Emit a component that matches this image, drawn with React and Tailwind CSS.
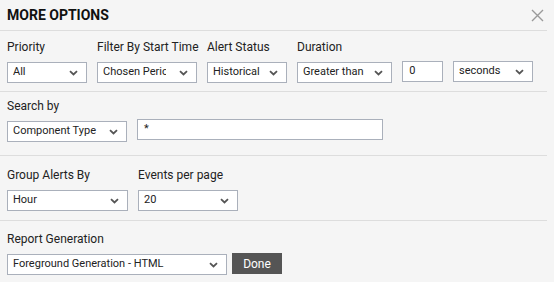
const Chevron = () => (
    <svg width="9" height="6" viewBox="0 0 9 6" className="shrink-0">
        <path d="M1 1.2 L4.5 4.5 L8 1.2" fill="none" stroke="#555" strokeWidth="1.8" />
    </svg>
);

const Select = ({ value, width, tight }) => (
    <div
        className="h-[21px] bg-white border border-[#aab0bb] flex items-center pl-[5px] pr-[8px] text-[11px] text-[#222] overflow-hidden"
        style={{ width }}
    >
        <span className={tight ? 'flex-1 min-w-0 whitespace-nowrap overflow-hidden mr-[13px]' : 'flex-1 min-w-0 whitespace-nowrap overflow-hidden mr-[4px]'}>{value}</span>
        <Chevron />
    </div>
);

const Field = ({ label, width, children }) => (
    <div className="flex flex-col shrink-0" style={{ width }}>
        <div className="text-[12px] text-[#222] leading-[15px] mb-[7px] whitespace-nowrap">{label}</div>
        {children}
    </div>
);

const App = () => {
    return (
        <div className="w-[554px] h-[282px] bg-[#f5f5f5] overflow-hidden" style={{ fontFamily: 'Roboto, "Liberation Sans", sans-serif' }}>
            <div className="h-[31px] flex items-center justify-between pl-[7px] pr-[5px] border-b border-[#ddd] w-[547px]">
                <div className="text-[14px] font-bold text-[#111] mt-[1px]">MORE OPTIONS</div>
                <svg width="13" height="13" viewBox="0 0 13 13" className="mt-[1px] -mr-[2px]">
                    <path d="M1 1 L12 12 M12 1 L1 12" stroke="#9a9a9a" strokeWidth="1.4" />
                </svg>
            </div>

            <div className="w-[547px] border-b border-[#ddd] h-[61px] pl-[7px] pt-[9px] flex gap-[10px]">
                <Field label="Priority" width={80}><Select value="All" width={80} /></Field>
                <Field label="Filter By Start Time" width={100}><Select value="Chosen Period" width={100} tight /></Field>
                <Field label="Alert Status" width={80}><Select value="Historical" width={80} /></Field>
                <Field label="Duration" width={236}>
                    <div className="flex gap-[10px] items-start">
                        <Select value="Greater than" width={96} />
                        <div className="-mt-[1px] h-[21px] w-[41px] bg-white border border-[#aab0bb] text-[11px] text-[#222] pl-[6px] leading-[18px]">0</div>
                        <div className="-mt-[1px]"><Select value="seconds" width={80} /></div>
                    </div>
                </Field>
            </div>

            <div className="w-[547px] border-b border-[#ddd] h-[64px] pl-[7px] pt-[7px] flex gap-[10px]">
                <Field label="Search by" width={400}>
                    <div className="flex gap-[10px] items-start">
                        <Select value="Component Type" width={120} />
                        <div className="-mt-[2px] h-[21px] w-[246px] bg-white border border-[#aab0bb] text-[11px] text-[#222] pl-[6px] leading-[18px]">*</div>
                    </div>
                </Field>
            </div>

            <div className="w-[547px] border-b border-[#ddd] h-[65px] pl-[7px] pt-[12px] flex gap-[10px]">
                <Field label="Group Alerts By" width={121}><Select value="Hour" width={121} /></Field>
                <Field label="Events per page" width={100}><Select value="20" width={100} /></Field>
            </div>

            <div className="pl-[7px] pt-[11px] flex">
                <Field label="Report Generation" width={300}>
                    <div className="flex gap-[5px] items-start">
                        <Select value="Foreground Generation - HTML" width={220} />
                        <button className="-mt-[1px] h-[21px] w-[50px] bg-[#555] text-white text-[12px] leading-[18px]">Done</button>
                    </div>
                </Field>
            </div>
        </div>
    );
};

export default App;
